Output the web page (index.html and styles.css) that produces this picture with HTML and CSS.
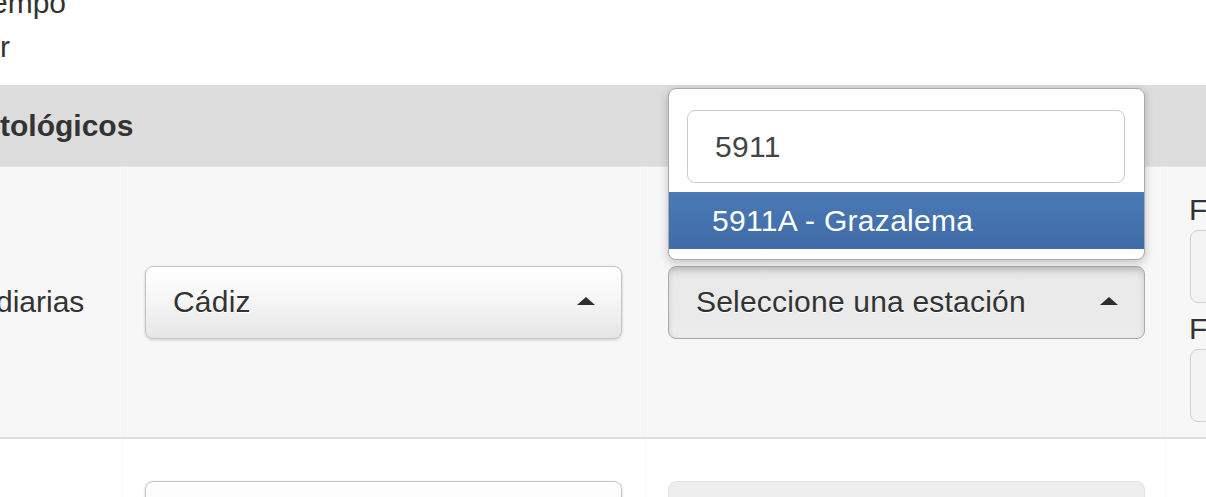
FILE: index.html
```html
<!DOCTYPE html>
<html lang="es">
<head>
<meta charset="utf-8">
<title>Datos climatológicos</title>
<link rel="stylesheet" href="styles.css">
</head>
<body>
<div class="page">
  <div class="intro">
    <div class="intro-line intro-first">empo</div>
    <div class="intro-line">r</div>
  </div>
  <div class="table">
    <div class="thead">tológicos</div>
    <div class="row row-a">
      <div class="cell cell-label"><span class="label-text">diarias</span></div>
      <div class="cell cell-sel">
        <div class="select">
          <span class="select-text">Cádiz</span>
          <span class="arrow"></span>
        </div>
      </div>
      <div class="cell cell-sel">
        <div class="select-wrap">
          <div class="dropdown">
            <div class="search">5911</div>
            <ul class="results">
              <li class="result highlighted">5911A - Grazalema</li>
            </ul>
          </div>
          <div class="select select-open">
            <span class="select-text">Seleccione una estación</span>
            <span class="arrow"></span>
          </div>
        </div>
      </div>
      <div class="cell cell-dates">
        <div class="flabel">F</div>
        <div class="finput"></div>
        <div class="flabel flabel-2">F</div>
        <div class="finput"></div>
      </div>
    </div>
    <div class="row row-b">
      <div class="cell cell-label"></div>
      <div class="cell cell-sel">
        <div class="select select-tall"></div>
      </div>
      <div class="cell cell-sel">
        <div class="select select-disabled select-tall"></div>
      </div>
      <div class="cell cell-dates"></div>
    </div>
  </div>
</div>
</body>
</html>
```
FILE: styles.css
```css
html, body {
  margin: 0;
  padding: 0;
  background: #fff;
}
body {
  width: 1206px;
  height: 497px;
  overflow: hidden;
  font-family: "Liberation Sans", Arial, Helvetica, sans-serif;
  font-size: 30px;
  color: #333;
}
.page {
  width: 1206px;
  overflow: hidden;
}
.intro {
  margin-top: -19px;
  margin-bottom: 16px;
}
.intro-line {
  line-height: 44px;
  height: 44px;
  white-space: nowrap;
}
.intro-first {
  margin-left: -9px;
}
.thead {
  background: #dddddd;
  height: 82px;
  line-height: 82px;
  font-weight: bold;
  border-bottom: 1px solid #e3e3e3;
  box-sizing: border-box;
}
.row {
  display: grid;
  grid-template-columns: 122px 523px 520px 1fr;
}
.row-a {
  background: #f7f7f7;
  height: 272px;
  border-bottom: 2px solid #dddddd;
  box-sizing: border-box;
}
.row-b {
  background: #fff;
  height: 140px;
}
.cell {
  box-sizing: border-box;
}
.row-a .cell + .cell {
  border-left: 1px solid #f1f1f1;
}
.row-b .cell + .cell {
  border-left: 1px solid #f8f8f8;
}
.cell-label {
  display: flex;
  align-items: center;
  line-height: 34px;
  overflow: hidden;
}
.label-text {
  margin-left: -4px;
  white-space: nowrap;
}
.cell-sel {
  display: flex;
  align-items: center;
  padding-left: 22px;
}
.row-b .cell-sel {
  align-items: flex-start;
  padding-top: 42px;
}
.select-wrap {
  position: relative;
  width: 477px;
}
.select {
  width: 477px;
  height: 73px;
  box-sizing: border-box;
  border: 1px solid #c4c4c4;
  border-radius: 8px;
  background: linear-gradient(to bottom, #ffffff 0%, #f6f6f6 45%, #e6e6e6 100%);
  box-shadow: 0 1px 3px rgba(0, 0, 0, 0.18);
  display: flex;
  align-items: center;
  justify-content: space-between;
  padding: 0 26px 0 27px;
  text-shadow: 0 1px 0 #fff;
}
.select-open {
  border-color: #a9a9a9;
  background: linear-gradient(to bottom, #dcdcdc 0%, #e9e9e9 14%, #ececec 100%);
  box-shadow: inset 0 3px 6px rgba(0, 0, 0, 0.12);
}
.select-tall {
  height: 90px;
}
.select-disabled {
  background: #eeeeee;
  border-color: #e2e2e2;
  box-shadow: none;
}
.select-text {
  line-height: 34px;
  white-space: nowrap;
  letter-spacing: 0.2px;
}
.arrow {
  width: 0;
  height: 0;
  border-left: 9px solid transparent;
  border-right: 9px solid transparent;
  border-bottom: 8px solid #2e2e2e;
  margin-top: -2px;
}
.dropdown {
  position: absolute;
  left: 0;
  bottom: calc(100% + 6px);
  width: 477px;
  box-sizing: border-box;
  background: #fff;
  border: 1px solid #a9a9a9;
  border-radius: 8px;
  box-shadow: 0 3px 10px rgba(0, 0, 0, 0.22);
  padding: 21px 0 10px;
  z-index: 5;
}
.search {
  margin: 0 19px 0 18px;
  height: 73px;
  box-sizing: border-box;
  border: 1px solid #cccccc;
  border-radius: 8px;
  background: #fff;
  padding-left: 27px;
  line-height: 71px;
  color: #444;
  letter-spacing: 0.3px;
}
.results {
  list-style: none;
  margin: 9px 0 0;
  padding: 0;
}
.result {
  height: 57px;
  line-height: 57px;
  padding-left: 43px;
  white-space: nowrap;
  letter-spacing: 0.3px;
}
.highlighted {
  background: linear-gradient(to bottom, #4a7ab6 0%, #3f6ba6 100%);
  color: #fff;
}
.cell-dates {
  display: flex;
  flex-direction: column;
  align-items: flex-start;
  padding: 26px 0 0 23px;
}
.flabel {
  line-height: 34px;
  height: 34px;
  margin-bottom: 3px;
}
.flabel-2 {
  margin-top: 9px;
}
.finput {
  width: 200px;
  height: 73px;
  box-sizing: border-box;
  border: 1px solid #d2d2d2;
  border-radius: 8px;
  background: #f3f3f3;
  margin-left: 1px;
}
```
